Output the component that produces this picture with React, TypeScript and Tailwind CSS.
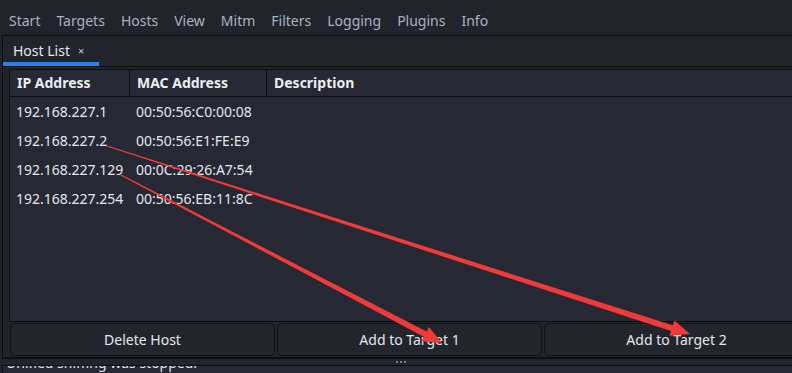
const menu = ["Start", "Targets", "Hosts", "View", "Mitm", "Filters", "Logging", "Plugins", "Info"];

const hosts = [
  { ip: "192.168.227.1", mac: "00:50:56:C0:00:08" },
  { ip: "192.168.227.2", mac: "00:50:56:E1:FE:E9" },
  { ip: "192.168.227.129", mac: "00:0C:29:26:A7:54" },
  { ip: "192.168.227.254", mac: "00:50:56:EB:11:8C" },
];

// tapered annotation arrow: thin at the tail, wider near the head
function arrowPoints(x0: number, y0: number, x1: number, y1: number) {
  const dx = x1 - x0;
  const dy = y1 - y0;
  const len = Math.hypot(dx, dy);
  const ux = dx / len;
  const uy = dy / len;
  const nx = -uy;
  const ny = ux;
  const headLen = 19;
  const bx = x1 - ux * headLen;
  const by = y1 - uy * headLen;
  const p = (x: number, y: number) => `${x.toFixed(1)},${y.toFixed(1)}`;
  return [
    p(x0 + nx * 0.6, y0 + ny * 0.6),
    p(bx + nx * 3, by + ny * 3),
    p(bx + nx * 8, by + ny * 8),
    p(x1, y1),
    p(bx - nx * 8, by - ny * 8),
    p(bx - nx * 3, by - ny * 3),
    p(x0 - nx * 0.6, y0 - ny * 0.6),
  ].join(" ");
}

export default function App() {
  return (
    <div className="relative w-[792px] h-[373px] overflow-hidden bg-[#22242c] font-['Noto_Sans',sans-serif]">
      <div className="w-[812px]">
        {/* menu bar */}
        <div className="h-[35px] pt-[11px] pl-[9px] flex gap-[16px] text-[14px] leading-[20px] text-[#a9b2c0]">
          {menu.map((m) => (
            <span key={m}>{m}</span>
          ))}
        </div>

        {/* main panel */}
        <div className="ml-[2px] border-l border-t border-b-2 border-[#0d0e12]">
          <div className="h-[31px] border-b border-[#0d0e12] flex">
            <div className="w-[96px] h-[30px] border-b-4 border-[#2f7de8] pl-[10px] pt-[5px] flex items-start gap-[8px]">
              <span className="text-[14px] leading-[20px] text-[#e3e6ec]">Host List</span>
              <span className="text-[11px] leading-[20px] text-[#c9ccd3]">×</span>
            </div>
          </div>

          <div className="mt-[2px] ml-[6px] h-[253px] border border-[#0d0e12] bg-[#262833] flex flex-col">
            <div className="h-[27px] border-b border-[#0d0e12] flex text-[14px] font-bold text-[#eceef2] leading-[26px]">
              <div className="w-[120px] border-r border-[#0d0e12] pl-[7px]">IP Address</div>
              <div className="w-[137px] border-r border-[#0d0e12] pl-[7px]">MAC Address</div>
              <div className="pl-[7px]">Description</div>
            </div>
            {hosts.map((h) => (
              <div key={h.ip} className="h-[29px] flex text-[14px] leading-[29px] text-[#e4e7ed]">
                <div className="w-[120px] pl-[6px]">{h.ip}</div>
                <div className="pl-[6px]">{h.mac}</div>
              </div>
            ))}
          </div>

          <div className="mt-[1px] mb-[1px] ml-[7px] flex gap-[2px]">
            {["Delete Host", "Add to Target 1", "Add to Target 2"].map((b) => (
              <button
                key={b}
                className="w-[265px] h-[33px] rounded-[5px] border border-[#111217] bg-[#23252d] text-[14px] text-[#e4e7ed]"
              >
                {b}
              </button>
            ))}
          </div>
        </div>

        {/* splitter */}
        <div className="h-[6px] flex items-center justify-center pr-[10px] gap-[2px]">
          <span className="w-[2px] h-[2px] bg-[#7d818c]" />
          <span className="w-[2px] h-[2px] bg-[#7d818c]" />
          <span className="w-[2px] h-[2px] bg-[#7d818c]" />
        </div>

        {/* log box, scrolled so only the bottom of the line shows */}
        <div className="ml-[2px] h-[20px] border-l border-t border-[#0d0e12] bg-[#262833] overflow-hidden">
          <div className="-mt-[13px] pl-[3px] text-[14px] leading-[20px] text-[#e4e7ed]">Unified sniffing was stopped.</div>
        </div>
      </div>

      {/* red annotation arrows */}
      <svg className="absolute left-0 top-0" width="792" height="373" viewBox="0 0 792 373">
        <polygon points={arrowPoints(107, 146, 690, 334)} fill="#ef3a3a" />
        <polygon points={arrowPoints(121, 175, 442, 343)} fill="#ef3a3a" />
      </svg>
    </div>
  );
}
